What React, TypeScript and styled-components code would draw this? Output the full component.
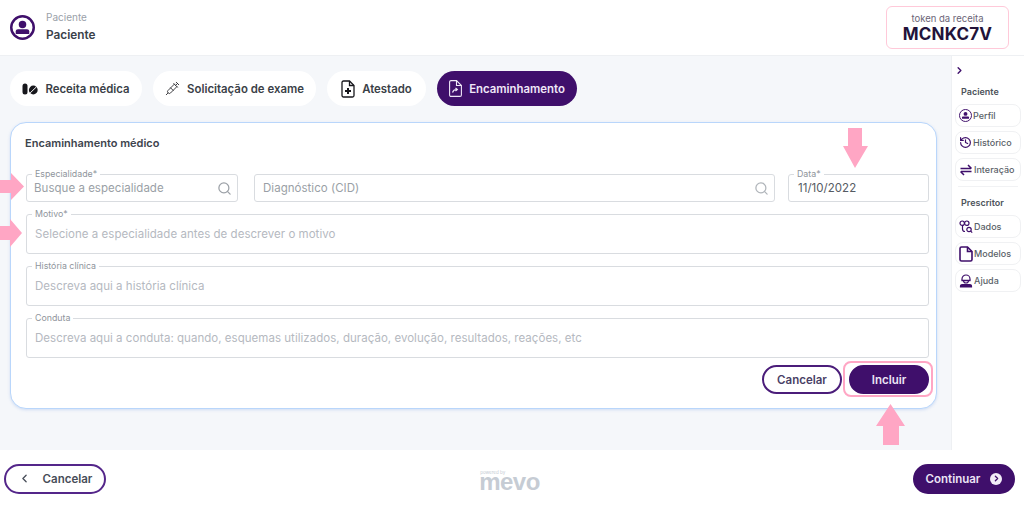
import * as React from 'react'
import styled, { createGlobalStyle } from 'styled-components'
import { ChevronLeft, ChevronRight, History, Search, Syringe } from 'lucide-react'

const purple = '#3f0f6b'
const pink = '#ffa6c4'

const GlobalStyle = createGlobalStyle`
  html, body { margin: 0; padding: 0; background: #fff; }
  * { box-sizing: border-box; }
  body { font-family: Inter, "Liberation Sans", sans-serif; }
`

const Page = styled.div`
  position: relative;
  width: 1024px;
  height: 508px;
  display: flex;
  flex-direction: column;
  overflow: hidden;
`

const Header = styled.header`
  height: 56px;
  flex: none;
  display: flex;
  align-items: flex-start;
  justify-content: space-between;
  padding: 6px 15px 0 10px;
  border-bottom: 1px solid #eef0f3;
`

const Patient = styled.div`
  display: flex;
  gap: 11px;
  padding-top: 5px;
`

const Avatar = styled.div`
  margin-top: 4px;
  height: 25px;
`

const PatientText = styled.div`
  display: flex;
  flex-direction: column;
  gap: 4px;
`

const PatientLabel = styled.span`
  font-size: 10px;
  line-height: 13px;
  color: #9aa1a9;
`

const PatientName = styled.span`
  font-size: 11.8px;
  line-height: 15px;
  font-weight: 600;
  color: #3a414a;
`

const Token = styled.div`
  width: 123px;
  height: 43px;
  border: 1px solid #ffc9d9;
  border-radius: 6px;
  display: flex;
  flex-direction: column;
  align-items: center;
  padding-top: 6px;
`

const TokenLabel = styled.span`
  font-size: 9.5px;
  line-height: 12px;
  color: #6b6577;
`

const TokenValue = styled.span`
  font-size: 17px;
  line-height: 19px;
  font-weight: 700;
  color: #22133a;
  letter-spacing: 0.2px;
`

const Middle = styled.div`
  flex: 1;
  display: flex;
  min-height: 0;
`

const Content = styled.main`
  width: 951px;
  background: #f5f7fa;
  padding: 15px 14px 0 10px;
`

const Tabs = styled.nav`
  display: flex;
  gap: 11px;
  margin-bottom: 16px;
`

const Tab = styled.div<{ $active?: boolean; $width: number }>`
  width: ${({ $width }) => $width}px;
  height: 35px;
  border-radius: 18px;
  display: flex;
  align-items: center;
  justify-content: center;
  gap: 7px;
  font-size: 11.4px;
  font-weight: 600;
  white-space: nowrap;
  background: ${({ $active }) => ($active ? purple : '#fff')};
  color: ${({ $active }) => ($active ? '#f0e8f8' : '#3a3f47')};
`

const Card = styled.section`
  height: 287px;
  background: #fff;
  border: 1px solid #b9d6fb;
  border-radius: 16px;
  padding: 13px 7px 0 15px;
  box-shadow: 0 1px 3px rgba(120, 160, 230, 0.3);
`

const CardTitle = styled.h2`
  margin: 0 0 24px -1px;
  font-size: 11px;
  line-height: 14px;
  font-weight: 600;
  color: #3d444d;
`

const FieldRow = styled.div`
  display: flex;
  justify-content: space-between;
  margin-bottom: 12px;
`

const SearchFields = styled.div`
  display: flex;
  gap: 16px;
`

const FieldColumn = styled.div`
  display: flex;
  flex-direction: column;
  gap: 12px;
`

const Field = styled.div<{ $tall?: boolean; $width?: number; $inset?: number }>`
  position: relative;
  width: ${({ $width }) => ($width ? `${$width}px` : 'auto')};
  height: ${({ $tall }) => ($tall ? 40 : 28)}px;
  border: 1px solid #d9dce0;
  border-radius: 3px;
  display: flex;
  align-items: center;
  justify-content: space-between;
  padding: 0 5px 0 ${({ $inset }) => $inset ?? 8}px;
`

const Legend = styled.span`
  position: absolute;
  top: -6px;
  left: 5px;
  padding: 0 3px;
  background: #fff;
  font-size: 8.8px;
  line-height: 10px;
  color: #8f959c;
`

const Value = styled.span<{ $filled?: boolean; $strong?: boolean }>`
  font-size: 11.5px;
  letter-spacing: 0.03px;
  color: ${({ $filled, $strong }) => ($filled ? '#555b63' : $strong ? '#9a9fa6' : '#b5b9bf')};
`

const Actions = styled.div`
  display: flex;
  justify-content: flex-end;
  gap: 7px;
  margin-top: 7px;
`

const Pill = styled.button<{ $primary?: boolean; $width: number }>`
  width: ${({ $width }) => $width}px;
  height: 29px;
  border-radius: 15px;
  border: 2px solid ${({ $primary }) => ($primary ? purple : '#4b1d7a')};
  background: ${({ $primary }) => ($primary ? purple : '#fff')};
  color: ${({ $primary }) => ($primary ? '#ece4f5' : '#4a3f66')};
  font-family: inherit;
  font-size: 11.5px;
  font-weight: 600;
  display: flex;
  align-items: center;
  justify-content: center;
  padding: 0;
`

const Sidebar = styled.aside`
  width: 73px;
  border-left: 1px solid #eef0f3;
  padding: 8px 3px 0 3px;
  display: flex;
  flex-direction: column;
`

const Toggle = styled.div`
  height: 12px;
  color: ${purple};
  display: flex;
  align-items: center;
  margin-left: -1px;
`

const SideGroup = styled.div`
  margin-top: 10px;
  display: flex;
  flex-direction: column;
  gap: 4px;
`

const SideDivider = styled.div`
  height: 1px;
  margin: 5px 3px 0;
  background: #f1f2f4;
`

const SideTitle = styled.h3`
  margin: 0 0 2px 6px;
  font-size: 9px;
  line-height: 12px;
  font-weight: 600;
  color: #4d535b;
`

const SideItem = styled.div`
  height: 23px;
  border: 1px solid #f0f1f3;
  border-radius: 8px;
  padding-left: 3px;
  display: flex;
  align-items: center;
  gap: 1px;
  font-size: 9px;
  font-weight: 500;
  color: #5a5f68;
  white-space: nowrap;
`

const Footer = styled.footer`
  height: 58px;
  flex: none;
  display: grid;
  grid-template-columns: 1fr auto 1fr;
  align-items: center;
  padding: 0 9px 0 4px;
`

const FooterButton = styled.button<{ $primary?: boolean }>`
  width: 102px;
  height: 30px;
  margin-top: -1px;
  justify-self: ${({ $primary }) => ($primary ? 'end' : 'start')};
  border-radius: 15px;
  border: 2px solid ${({ $primary }) => ($primary ? purple : '#54268a')};
  background: ${({ $primary }) => ($primary ? purple : '#fff')};
  color: ${({ $primary }) => ($primary ? '#ece4f5' : '#474d58')};
  font-family: inherit;
  font-size: 11.5px;
  font-weight: 600;
  display: flex;
  align-items: center;
  justify-content: center;
  gap: ${({ $primary }) => ($primary ? 10 : 12)}px;
  padding: 0;
`

const NextDot = styled.span`
  width: 12px;
  height: 12px;
  border-radius: 50%;
  background: #f2ecf8;
  color: ${purple};
  display: flex;
  align-items: center;
  justify-content: center;
`

const Logo = styled.div`
  display: flex;
  flex-direction: column;
  align-items: flex-start;
  color: #c6ccd4;
`

const LogoSmall = styled.span`
  font-size: 4.5px;
  line-height: 5px;
  margin-left: 1px;
`

const LogoWord = styled.span`
  font-family: "Liberation Sans", sans-serif;
  font-size: 24px;
  line-height: 14px;
  font-weight: 700;
  letter-spacing: -0.5px;
`

const Mark = styled.svg<{ $left: number; $top: number }>`
  position: absolute;
  left: ${({ $left }) => $left}px;
  top: ${({ $top }) => $top}px;
  fill: ${pink};
`

const Highlight = styled.div`
  position: absolute;
  left: 843px;
  top: 361px;
  width: 90px;
  height: 36px;
  border: 2.5px solid ${pink};
  border-radius: 8px;
`

const PillsIcon = () => (
  <svg width="16" height="12" viewBox="0 0 16 12" fill="#17171c">
    <path d="M.5 3a2.500 2.500 0 0 1 5 0v6a2.500 2.500 0 0 1-5 0z" />
    <circle cx="11.300" cy="7" r="4.400" />
    <path d="M8.100 10 14.300 4" stroke="#fff" strokeWidth="1" />
  </svg>
)

const FilePlusIcon = () => (
  <svg width="14" height="18" viewBox="0 0 14 18" fill="none" stroke="#17171c" strokeWidth="1.300">
    <path d="M2.500 1h6L13 5.500V15.500a1.500 1.500 0 0 1-1.500 1.500h-9A1.500 1.500 0 0 1 1 15.500V2.500A1.500 1.500 0 0 1 2.500 1z" />
    <path d="M8.500 1v4.500H13" />
    <path d="M7 8v6M4 11h6" strokeWidth="2" />
  </svg>
)

const FileSendIcon = () => (
  <svg width="13" height="17" viewBox="0 0 13 17" fill="none" stroke="#efe7f7" strokeWidth="1.100">
    <path d="M2 .6h5.500L12.400 5.500V15a1.400 1.400 0 0 1-1.400 1.400H2A1.400 1.400 0 0 1 .6 15V2A1.400 1.400 0 0 1 2 .6z" />
    <path d="M7.500.6v4.900h4.900" />
    <path d="M3.500 12.500c.6-2 2-3 4-3M6.500 8l1.800 1.500L6.500 11" strokeWidth="1.200" />
  </svg>
)

const UserCircleIcon = ({ size, stroke }: { size: number; stroke: number }) => (
  <svg width={size} height={size} viewBox="0 0 24 24" fill="none">
    <circle cx="12" cy="12" r={12 - stroke / 2} stroke={purple} strokeWidth={stroke} />
    <circle cx="12" cy="9" r="3.600" fill={purple} />
    <path d="M5.500 15.500c0-1 1-1.800 2.200-1.800h8.600c1.200 0 2.200.8 2.200 1.800v2.700h-13z" fill={purple} />
  </svg>
)

const SwapIcon = () => (
  <svg width="14" height="14" viewBox="0 0 14 14" fill="none" stroke={purple} strokeWidth="1.500">
    <path d="M1.500 5.500H12M9 2l3.500 3.500" />
    <path d="M12.500 8.500H2M5 12 1.500 8.500" />
  </svg>
)

const DataIcon = () => (
  <svg width="14" height="14" viewBox="0 0 14 14" fill="none" stroke={purple} strokeWidth="1.200">
    <circle cx="3.200" cy="3.200" r="2.200" />
    <circle cx="7.800" cy="3.200" r="2.200" />
    <path d="M3.500 5.500v3.500c0 1.500 1 2.500 2.500 2.500" />
    <circle cx="10" cy="9.500" r="2.200" />
    <path d="M11.700 11.200l1.500 1.500" />
  </svg>
)

const TemplateIcon = () => (
  <svg width="14" height="16" viewBox="0 0 14 16" fill="none" stroke={purple} strokeWidth="1.600">
    <path d="M2.500 1h6L13 5.500V13.500a1.500 1.500 0 0 1-1.500 1.500h-9A1.500 1.500 0 0 1 1 13.500V2.500A1.500 1.500 0 0 1 2.500 1z" />
    <path d="M8.500 1v4.500H13" />
  </svg>
)

const HelpIcon = () => (
  <svg width="14" height="14" viewBox="0 0 14 14" fill="none" stroke={purple} strokeWidth="1.200">
    <path d="M3 6.500V5a4 4 0 0 1 8 0v1.500" />
    <path d="M2.500 6.500h9" strokeWidth="1.500" />
    <path d="M4.500 6.500a2.500 2.500 0 0 0 5 0" />
    <path d="M1.500 13v-.8c0-1.200 1-1.700 2-1.700h7c1 0 2 .5 2 1.700v.8z" fill={purple} />
  </svg>
)

const SideEntry = ({ icon, label }: { icon: React.ReactNode; label: string }) => (
  <SideItem>
    {icon}
    {label}
  </SideItem>
)

const LongField = ({ legend, hint }: { legend: string; hint: string }) => (
  <Field $tall>
    <Legend>{legend}</Legend>
    <Value>{hint}</Value>
  </Field>
)

export default function App() {
  return (
    <Page>
      <GlobalStyle />
      <Header>
        <Patient>
          <Avatar>
            <UserCircleIcon size={25} stroke={2.400} />
          </Avatar>
          <PatientText>
            <PatientLabel>Paciente</PatientLabel>
            <PatientName>Paciente</PatientName>
          </PatientText>
        </Patient>
        <Token>
          <TokenLabel>token da receita</TokenLabel>
          <TokenValue>MCNKC7V</TokenValue>
        </Token>
      </Header>

      <Middle>
        <Content>
          <Tabs>
            <Tab $width={132}>
              <PillsIcon />
              Receita médica
            </Tab>
            <Tab $width={163}>
              <Syringe size={15} strokeWidth={1.300} color="#17171c" />
              Solicitação de exame
            </Tab>
            <Tab $width={99}>
              <FilePlusIcon />
              Atestado
            </Tab>
            <Tab $width={140} $active>
              <FileSendIcon />
              Encaminhamento
            </Tab>
          </Tabs>

          <Card>
            <CardTitle>Encaminhamento médico</CardTitle>
            <FieldRow>
              <SearchFields>
                <Field $width={212} $inset={7}>
                  <Legend>Especialidade*</Legend>
                  <Value $strong>Busque a especialidade</Value>
                  <Search size={15} color="#9ca1a7" strokeWidth={2} />
                </Field>
                <Field $width={521}>
                  <Value $strong>Diagnóstico (CID)</Value>
                  <Search size={15} color="#b0b5ba" strokeWidth={2} />
                </Field>
              </SearchFields>
              <Field $width={141} $inset={9}>
                <Legend>Data*</Legend>
                <Value $filled>11/10/2022</Value>
              </Field>
            </FieldRow>
            <FieldColumn>
              <LongField legend="Motivo*" hint="Selecione a especialidade antes de descrever o motivo" />
              <LongField legend="História clínica" hint="Descreva aqui a história clínica" />
              <LongField
                legend="Conduta"
                hint="Descreva aqui a conduta: quando, esquemas utilizados, duração, evolução, resultados, reações, etc"
              />
            </FieldColumn>
            <Actions>
              <Pill $width={80}>Cancelar</Pill>
              <Pill $width={80} $primary>Incluir</Pill>
            </Actions>
          </Card>
        </Content>

        <Sidebar>
          <Toggle>
            <ChevronRight size={11} strokeWidth={3} />
          </Toggle>
          <SideGroup>
            <SideTitle>Paciente</SideTitle>
            <SideEntry icon={<UserCircleIcon size={13} stroke={1.800} />} label="Perfil" />
            <SideEntry icon={<History size={13} color={purple} strokeWidth={2.200} />} label="Histórico" />
            <SideEntry icon={<SwapIcon />} label="Interação" />
          </SideGroup>
          <SideDivider />
          <SideGroup>
            <SideTitle>Prescritor</SideTitle>
            <SideEntry icon={<DataIcon />} label="Dados" />
            <SideEntry icon={<TemplateIcon />} label="Modelos" />
            <SideEntry icon={<HelpIcon />} label="Ajuda" />
          </SideGroup>
        </Sidebar>
      </Middle>

      <Footer>
        <FooterButton>
          <ChevronLeft size={13} strokeWidth={2.400} />
          Cancelar
        </FooterButton>
        <Logo>
          <LogoSmall>powered by</LogoSmall>
          <LogoWord>mevo</LogoWord>
        </Logo>
        <FooterButton $primary>
          Continuar
          <NextDot>
            <ChevronRight size={9} strokeWidth={3.500} />
          </NextDot>
        </FooterButton>
      </Footer>

      {/* annotation marks drawn over the screenshot */}
      <Mark $left={0} $top={173} width="25" height="27" viewBox="0 0 25 27">
        <path d="M0 7h11V0l13 13.500L11 27v-7H0z" />
      </Mark>
      <Mark $left={0} $top={219} width="23" height="28" viewBox="0 0 23 28">
        <path d="M0 7h10V0l12 14-12 14v-7H0z" />
      </Mark>
      <Mark $left={843} $top={128} width="25" height="40" viewBox="0 0 25 40">
        <path d="M5 0h14v18h6L12 40 0 18h5z" />
      </Mark>
      <Mark $left={876} $top={404} width="29" height="41" viewBox="0 0 29 41">
        <path d="M14.500 0 29 22h-6v19H7V22H0z" />
      </Mark>
      <Highlight />
    </Page>
  )
}
